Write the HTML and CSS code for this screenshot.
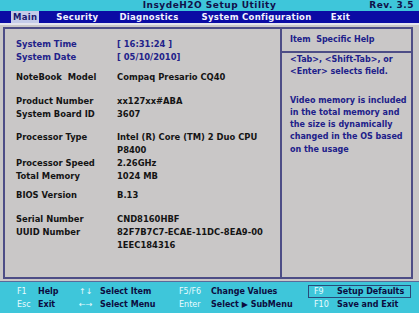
FILE: index.html
```html
<!DOCTYPE html>
<html lang="en">
<head>
    <meta charset="UTF-8">
    <title>InsydeH2O Setup Utility</title>
    <link rel="stylesheet" href="styles.css">
</head>
<body>
    <div id="screen">
        <div class="titlebar">
            <span class="title">InsydeH2O Setup Utility</span>
            <span class="rev">Rev. 3.5</span>
        </div>
        <div class="menubar">
            <span class="tab active">Main</span>
            <span class="tab t-sec">Security</span>
            <span class="tab t-diag">Diagnostics</span>
            <span class="tab t-sys">System Configuration</span>
            <span class="tab t-exit">Exit</span>
        </div>

        <div class="frame">
            <div class="main">
                <div class="group blue">
                    <div class="row"><span class="lbl">System Time</span><span class="val">[ 16:31:24 ]</span></div>
                    <div class="row"><span class="lbl">System Date</span><span class="val">[ 05/10/2010]</span></div>
                </div>
                <div class="group g2">
                    <div class="row"><span class="lbl">NoteBook&nbsp; Model</span><span class="val">Compaq Presario CQ40</span></div>
                </div>
                <div class="group g3">
                    <div class="row"><span class="lbl">Product Number</span><span class="val">xx127xx#ABA</span></div>
                    <div class="row"><span class="lbl">System Board ID</span><span class="val">3607</span></div>
                </div>
                <div class="group g4">
                    <div class="row"><span class="lbl">Processor Type</span><span class="val">Intel (R) Core (TM) 2 Duo CPU<br>P8400</span></div>
                    <div class="row"><span class="lbl">Processor Speed</span><span class="val">2.26GHz</span></div>
                    <div class="row"><span class="lbl">Total Memory</span><span class="val">1024 MB</span></div>
                </div>
                <div class="group g5">
                    <div class="row"><span class="lbl">BIOS Version</span><span class="val">B.13</span></div>
                </div>
                <div class="group g6">
                    <div class="row"><span class="lbl">Serial Number</span><span class="val">CND8160HBF</span></div>
                    <div class="row"><span class="lbl">UUID Number</span><span class="val">82F7B7C7-ECAE-11DC-8EA9-00<br>1EEC184316</span></div>
                </div>
            </div>
            <div class="help">
                <div class="help-head">Item&nbsp; Specific Help</div>
                <div class="help-body">
                    <p>&lt;Tab&gt;, &lt;Shift-Tab&gt;, or<br>&lt;Enter&gt; selects field.</p>
                    <p>Video memory is included<br>in the total memory and<br>the size is dynamically<br>changed in the OS based<br>on the usage</p>
                </div>
            </div>
        </div>

        <div class="keys">
            <div class="k c1"><b>F1</b><span>Help</span></div>
            <div class="k c2"><b>&uarr;&darr;</b><span>Select Item</span></div>
            <div class="k c3"><b>F5/F6</b><span>Change Values</span></div>
            <div class="k c4 boxed"><b>F9</b><span>Setup Defaults</span></div>
            <div class="k c1"><b>Esc</b><span>Exit</span></div>
            <div class="k c2"><b>&larr;&rarr;</b><span>Select Menu</span></div>
            <div class="k c3"><b>Enter</b><span>Select &#9654; SubMenu</span></div>
            <div class="k c4"><b>F10</b><span>Save and Exit</span></div>
        </div>
    </div>
</body>
</html>
```

FILE: styles.css
```css
* {
    box-sizing: border-box;
}

html, body {
    margin: 0;
    background-color: #c9c7c7;
}

#screen {
    width: 419px;
    height: 313px;
    overflow: hidden;
    font-family: "DejaVu Sans", Verdana, sans-serif;
    font-weight: bold;
    font-size: 8px;
    display: flex;
    flex-direction: column;
}

.titlebar {
    height: 11px;
    background-color: #3ec6da;
    color: #10104a;
    display: flex;
    justify-content: center;
    align-items: center;
    position: relative;
    line-height: 11px;
    font-size: 9px;
    letter-spacing: 0.5px;
}
.titlebar .rev {
    position: absolute;
    right: 5px;
    top: 0;
}

.menubar {
    height: 14px;
    background-color: #0b0ba4;
    color: #f2f2ff;
    display: flex;
    align-items: center;
    padding-left: 11px;
    border-bottom: 2px solid #e4e4ee;
    font-size: 8.5px;
    letter-spacing: 0.3px;
}
.tab {
    line-height: 12px;
    padding: 0 2px;
}
.tab.active {
    background-color: #c4cbe8;
    color: #1a1a70;
}
.t-sec { margin-left: 15px; }
.t-diag { margin-left: 17px; }
.t-sys { margin-left: 19px; }
.t-exit { margin-left: 15px; }

.frame {
    margin: 2px 6px 0 3px;
    height: 252px;
    border: 2px solid #4d4d86;
    display: flex;
}

.main {
    width: 277px;
    border-right: 2px solid #4d4d86;
    padding: 9px 0 0 11px;
    color: #141414;
    font-size: 8.4px;
}
.group {
    margin-bottom: 8px;
}
.g2 { margin-bottom: 11px; }
.g3 { margin-bottom: 10px; }
.g4 { margin-bottom: 6px; }
.g5 { margin-bottom: 11px; }
.blue {
    color: #22228a;
    margin-bottom: 7px;
}
.row {
    display: flex;
    line-height: 13px;
}
.lbl {
    width: 101px;
    flex: none;
}

.help {
    flex: 1;
    color: #20208a;
}
.help-head {
    height: 24px;
    line-height: 22px;
    padding-left: 8px;
    border-bottom: 2px solid #4d4d86;
}
.help-body {
    padding: 1px 0 0 8px;
    line-height: 12.3px;
}
.help-body p {
    margin: 0 0 16px 0;
}

.keys {
    margin-top: 2px;
    flex: 1;
    background-color: #3ec6da;
    border-top: 1px solid #5a6a9a;
    display: grid;
    grid-template-columns: 79px 100px 129px 105px;
    grid-auto-rows: 13px;
    padding: 3px 0 0 0;
    color: #0c0c40;
}
.k {
    display: flex;
    align-items: center;
    line-height: 12px;
}
.k b {
    color: #e8fbff;
    font-weight: normal;
}
.c1 { padding-left: 17px; }
.c1 b { width: 21px; }
.c2 b { width: 21px; }
.c3 b { width: 32px; }
.c4 {
    padding-left: 6px;
}
.c4 b { width: 23px; }
.boxed {
    outline: 1px solid #2a4a7a;
    outline-offset: -1px;
    margin-right: 2px;
}
```
